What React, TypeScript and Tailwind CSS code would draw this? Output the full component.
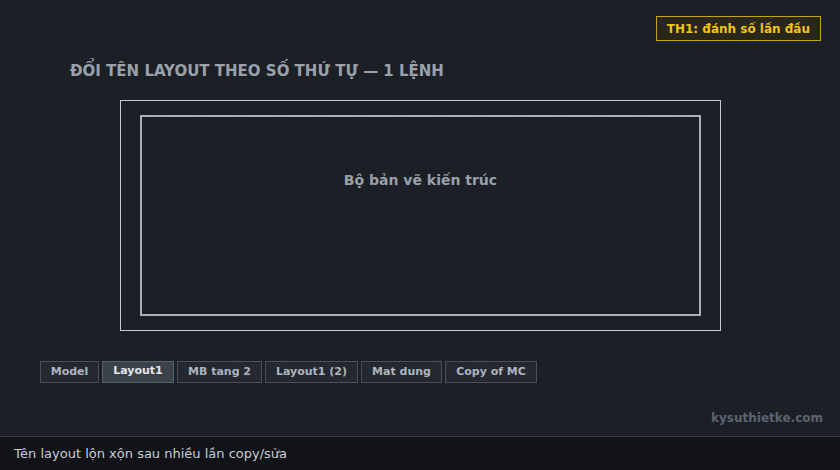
const tabs = [
  { label: "Model", w: "w-[59px]" },
  { label: "Layout1", w: "w-[72px]", active: true },
  { label: "MB tang 2", w: "w-[85px]" },
  { label: "Layout1 (2)", w: "w-[93px]" },
  { label: "Mat dung", w: "w-[81px]" },
  { label: "Copy of MC", w: "w-[92px]" },
];

export default function App() {
  return (
    <div className="flex h-[470px] w-full flex-col bg-[#1b1f26] font-['DejaVu_Sans',sans-serif]">
      <div className="flex flex-1 flex-col bg-[radial-gradient(circle,#242932_1px,transparent_1.5px)] bg-[size:40px_40px] bg-[position:-20px_-20px]">
        {/* badge */}
        <div className="flex justify-end pr-[19px] pt-[16px]">
          <div className="flex h-[25px] items-center border border-[#c9a21c] bg-[#29261a] px-[10px] text-[12px] font-bold text-[#f2c318]">
            TH1: đánh số lần đầu
          </div>
        </div>

        <h1 className="ml-[70px] mt-[20px] text-[15px] font-bold leading-[20px] text-[#9ba1aa]">
          ĐỔI TÊN LAYOUT THEO SỐ THỨ TỰ — 1 LỆNH
        </h1>

        {/* sheet frame */}
        <div className="ml-[120px] mt-[19px] h-[231px] w-[601px] border border-[#c6cacf] px-[19px] pt-[14px]">
          <div className="flex h-[201px] w-[561px] justify-center border-2 border-[#a9b0ba] pt-[54px]">
            <span className="text-[14px] font-bold leading-[18px] text-[#9aa0a9]">
              Bộ bản vẽ kiến trúc
            </span>
          </div>
        </div>

        {/* layout tabs */}
        <div className="ml-[40px] mt-[30px] flex gap-[3px]">
          {tabs.map((t) => (
            <div
              key={t.label}
              className={`flex h-[22px] ${t.w} justify-center border text-[11px] font-bold ${
                t.active
                  ? "border-[#58606a] bg-[#3a414b] pt-[1px] text-[#e3e6ea]"
                  : "border-[#4a5059] bg-[#242931] pt-[2px] text-[#aeb4bc]"
              }`}
            >
              {t.label}
            </div>
          ))}
        </div>

        <div className="mt-[28px] flex justify-end pr-[17px] text-[12px] font-bold leading-[15px] text-[#5c6470]">
          kysuthietke.com
        </div>
      </div>

      <div className="flex h-[34px] items-center border-t border-[#363c45] bg-[#111318] px-[14px] text-[13px] text-[#c9cdd3]">
        Tên layout lộn xộn sau nhiều lần copy/sửa
      </div>
    </div>
  );
}
